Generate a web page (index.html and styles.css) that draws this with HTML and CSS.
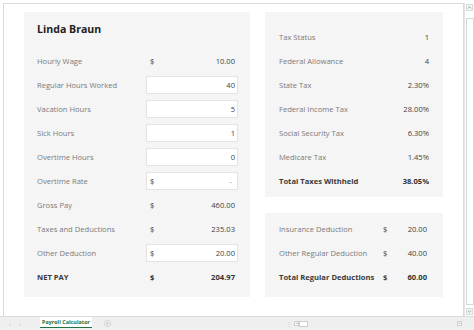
FILE: index.html
```html
<!DOCTYPE html>
<html>
<head>
<meta charset="utf-8">
<link rel="stylesheet" href="styles.css">
</head>
<body>
<div class="window">
  <div class="sheet">
    <div class="grid">
      <section class="card left">
        <h1 class="title">Linda Braun</h1>
        <div class="rows">
          <div class="row"><span class="label">Hourly Wage</span><span class="val"><span>$</span><span>10.00</span></span></div>
          <div class="row"><span class="label">Regular Hours Worked</span><span class="val box"><span></span><span>40</span></span></div>
          <div class="row"><span class="label">Vacation Hours</span><span class="val box"><span></span><span>5</span></span></div>
          <div class="row"><span class="label">Sick Hours</span><span class="val box"><span></span><span>1</span></span></div>
          <div class="row"><span class="label">Overtime Hours</span><span class="val box"><span></span><span>0</span></span></div>
          <div class="row"><span class="label">Overtime Rate</span><span class="val box"><span>$</span><span class="dash">-</span></span></div>
          <div class="row"><span class="label">Gross Pay</span><span class="val"><span>$</span><span>460.00</span></span></div>
          <div class="row"><span class="label">Taxes and Deductions</span><span class="val"><span>$</span><span>235.03</span></span></div>
          <div class="row"><span class="label">Other Deduction</span><span class="val box"><span>$</span><span>20.00</span></span></div>
          <div class="row total"><span class="label">NET PAY</span><span class="val"><span>$</span><span>204.97</span></span></div>
        </div>
      </section>
      <div class="rightcol">
        <section class="card taxes">
          <div class="row2"><span class="label">Tax Status</span><span class="num">1</span></div>
          <div class="row2"><span class="label">Federal Allowance</span><span class="num">4</span></div>
          <div class="row2"><span class="label">State Tax</span><span class="num">2.30%</span></div>
          <div class="row2"><span class="label">Federal Income Tax</span><span class="num">28.00%</span></div>
          <div class="row2"><span class="label">Social Security Tax</span><span class="num">6.30%</span></div>
          <div class="row2"><span class="label">Medicare Tax</span><span class="num">1.45%</span></div>
          <div class="row2 total"><span class="label">Total Taxes Withheld</span><span class="num">38.05%</span></div>
        </section>
        <section class="card deductions">
          <div class="row3"><span class="label">Insurance Deduction</span><span class="cur">$</span><span class="num">20.00</span></div>
          <div class="row3"><span class="label">Other Regular Deduction</span><span class="cur">$</span><span class="num">40.00</span></div>
          <div class="row3 total"><span class="label">Total Regular Deductions</span><span class="cur">$</span><span class="num">60.00</span></div>
        </section>
      </div>
    </div>
  </div>
  <div class="vscroll">
    <div class="varrow"><svg width="5" height="5" viewBox="0 0 5 5"><path d="M1 3.5 L2.5 1.5 L4 3.5" fill="none" stroke="#9a9a9a" stroke-width="0.8"/></svg></div>
    <div class="vtrack"></div>
    <div class="varrow"><svg width="5" height="5" viewBox="0 0 5 5"><path d="M1 1.5 L2.5 3.5 L4 1.5" fill="none" stroke="#9a9a9a" stroke-width="0.8"/></svg></div>
  </div>
  <div class="tabbar">
    <div class="navs"><span class="nav">‹</span><span class="nav">›</span></div>
    <div class="tab">Payroll Calculator</div>
    <div class="add"><svg width="7" height="7" viewBox="0 0 7 7"><circle cx="3.5" cy="3.5" r="3" fill="none" stroke="#c8c8c8" stroke-width="0.7"/><path d="M3.5 2 V5 M2 3.5 H5" stroke="#c8c8c8" stroke-width="0.7"/></svg></div>
    <div class="spacer"></div>
    <div class="hscroll">
      <span class="sep">⋮</span>
      <span class="harrow">◂</span>
      <span class="thumb"></span>
      <span class="htrack"></span>
      <span class="harrow">▸</span>
    </div>
  </div>
  <div class="corner"></div>
</div>
</body>
</html>
```
FILE: styles.css
```css
* { box-sizing: border-box; }
html, body { margin: 0; padding: 0; background: #ffffff; }
body {
  width: 474px;
  height: 330px;
  overflow: hidden;
  font-family: "Open Sans", "Noto Sans", sans-serif;
  font-size: 7.6px;
  color: #7a7a7a;
}
.window {
  display: grid;
  grid-template-columns: 1fr 10px;
  grid-template-rows: 1fr 14px;
  width: 474px;
  height: 330px;
}
.sheet {
  margin: 3px 0 0 3px;
  border-left: 1px solid #dadada;
  border-top: 1px solid #dadada;
  border-right: 1px solid #dadada;
  padding: 8px 0 0 20px;
  overflow: hidden;
}
.grid {
  display: grid;
  grid-template-columns: 226px 178px;
  column-gap: 15px;
  height: 285px;
}
.card { background: #f5f5f5; }
.left { padding: 5px 12px 7px 13px; }
.title {
  margin: 0;
  height: 24px;
  line-height: 24px;
  font-size: 10.6px;
  font-weight: 700;
  color: #222;
}
.rows { margin-top: 8px; }
.row {
  display: grid;
  grid-template-columns: 1fr 92px;
  align-items: center;
  height: 24px;
}
.val {
  display: flex;
  justify-content: space-between;
  align-items: center;
  height: 18px;
  padding: 0 3px 0 4px;
  color: #444;
}
.box { background: #fff; border: 1px solid #e3e3e3; padding: 0 2px 0 3px; }
.dash { padding-right: 3px; color: #888; }
.total .label, .total .val, .total .num, .total .cur { font-weight: 700; color: #333; }
.total .label { color: #3a3a3a; }

.rightcol { display: flex; flex-direction: column; gap: 16px; }
.taxes { height: 185px; padding: 13px 14px 0 14px; }
.row2 {
  display: flex;
  justify-content: space-between;
  align-items: center;
  height: 24px;
}
.num { color: #444; }
.deductions { height: 84px; padding: 4px 16px 0 14px; }
.row3 {
  display: grid;
  grid-template-columns: 1fr 26px 18px;
  align-items: center;
  height: 24px;
}
.row3 .label { white-space: nowrap; }
.row3 .cur { color: #444; }
.row3 .num { text-align: right; white-space: nowrap; direction: rtl; }

.vscroll {
  margin-top: 3px;
  border-left: 1px solid #e4e4e4;
  background: #fff;
  display: flex;
  flex-direction: column;
  align-items: center;
  padding: 1px 0;
}
.varrow { width: 7px; height: 7px; border: 1px solid #d8d8d8; display: flex; align-items: center; justify-content: center; background: #f4f4f4; }
.vtrack { flex: 1; width: 8px; margin: 7px 0 3px; border: 1px solid #d6d6d6; background: #fff; }

.tabbar {
  display: flex;
  align-items: stretch;
  background: #efefef;
  border-top: 1px solid #dadada;
  font-size: 5.4px;
}
.navs { display: flex; gap: 8px; padding: 0 0 0 9px; width: 40px; align-items: center; color: #aaa; font-size: 6px; }
.tab {
  background: #fff;
  color: #217346;
  font-weight: 700;
  white-space: nowrap;
  display: flex;
  align-items: center;
  border-bottom: 1px solid #217346;
  margin-bottom: 2px;
  width: 52px;
  justify-content: center;
}
.add { display: flex; align-items: center; padding-left: 12px; }
.spacer { flex: 1; }
.hscroll { display: flex; align-items: center; width: 178px; padding-right: 2px; }
.sep { color: #c8c8c8; font-size: 6px; width: 8px; }
.harrow { width: 5px; height: 5px; border: 1px solid #cfcfcf; font-size: 3px; line-height: 3px; color: #999; text-align: center; background: #f8f8f8; }
.thumb { width: 9px; height: 6px; border: 1px solid #cfcfcf; background: #fff; }
.htrack { flex: 1; }
.corner { background: #efefef; border-top: 1px solid #dadada; }
```
